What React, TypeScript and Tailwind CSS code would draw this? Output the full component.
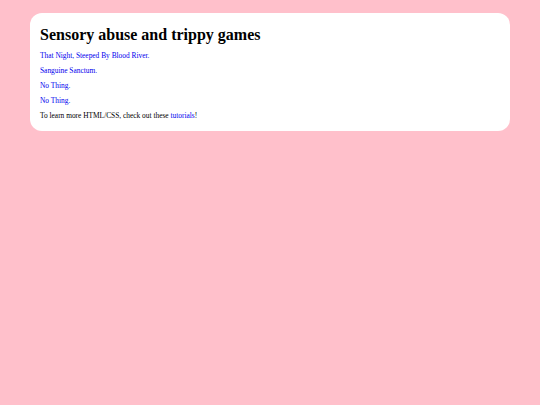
export default function App() {
  const link = "text-[#0000ee]";
  return (
    <div className="min-h-[405px] w-full bg-[#ffc0cb] pt-[13px] px-[30px] font-['Liberation_Serif',serif]">
      <div className="bg-white rounded-[12px] px-[10px] pt-[12px] pb-[11px]">
        <h1 className="text-[16px] leading-[20px] font-bold text-black mb-[7px]">Sensory abuse and trippy games</h1>
        <div className="flex flex-col gap-[7px] text-[7.4px] leading-[8px] text-black">
          <p><a className={link}>That Night, Steeped By Blood River.</a></p>
          <p><a className={link}>Sanguine Sanctum.</a></p>
          <p><a className={link}>No Thing.</a></p>
          <p><a className={link}>No Thing.</a></p>
          <p>To learn more HTML/CSS, check out these <a className={link}>tutorials</a>!</p>
        </div>
      </div>
    </div>
  );
}
